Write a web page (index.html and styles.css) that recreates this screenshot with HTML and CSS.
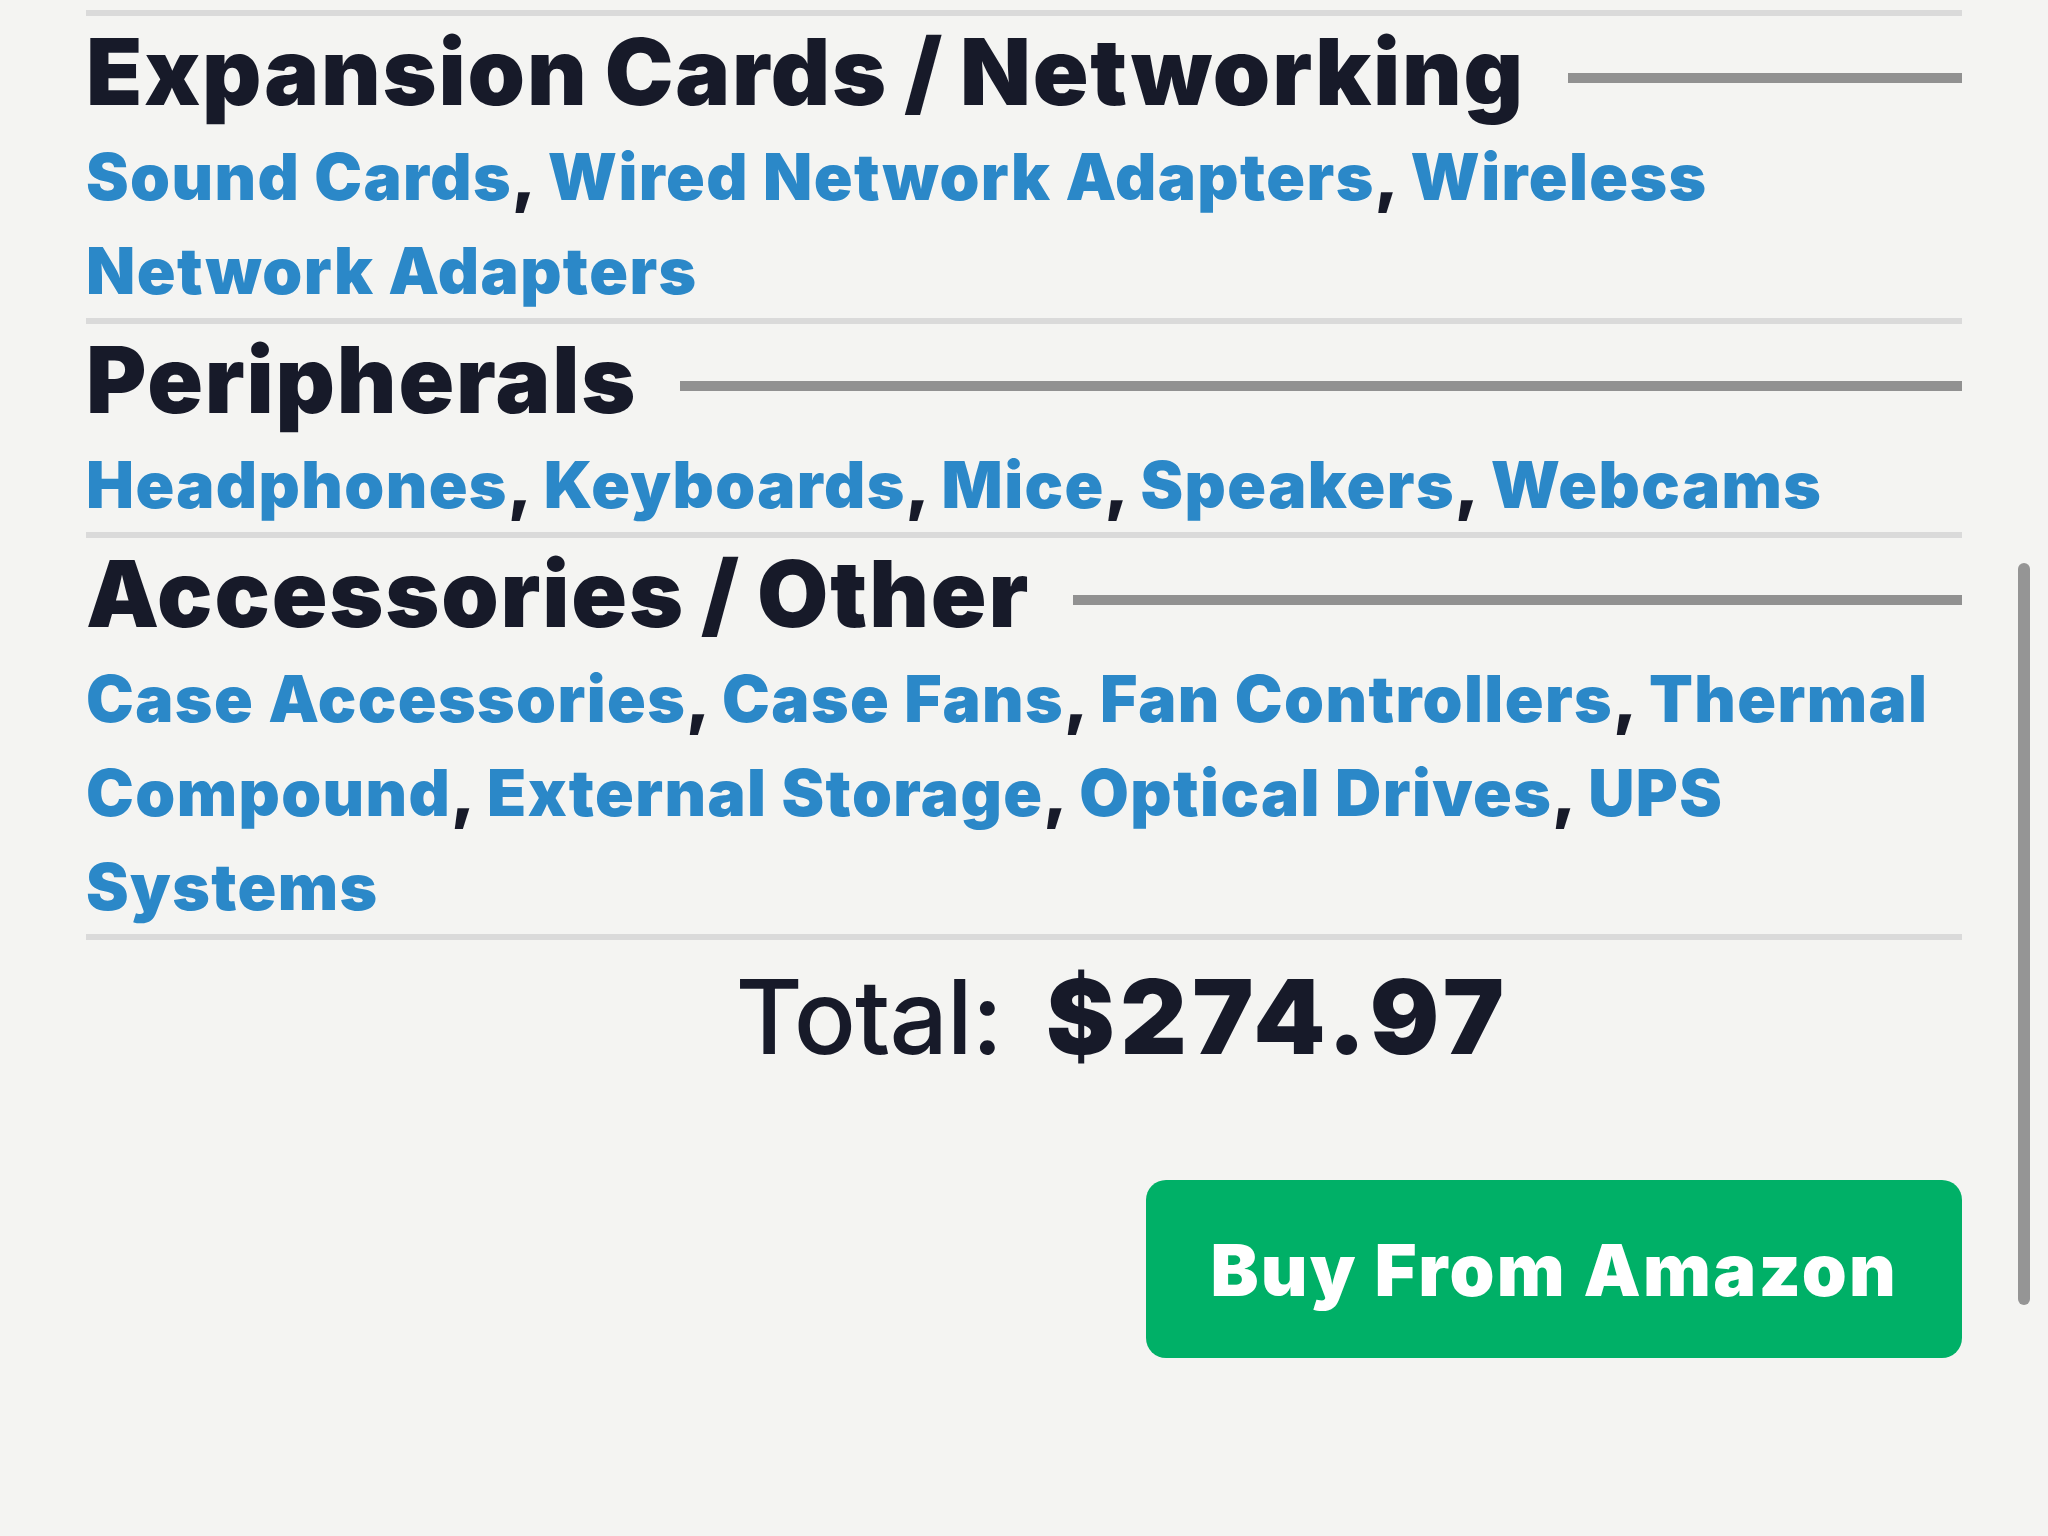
FILE: index.html
```html
<!DOCTYPE html>
<html lang="en">
<head>
  <meta charset="UTF-8" />
  <title>Build Parts – Summary</title>
  <link rel="stylesheet" href="styles.css">
</head>
<body>
  <div class="build-list">
    <div class="category">
      <div class="category-head">
        <h2>Expansion Cards / Networking</h2>
        <span class="head-line"></span>
      </div>
      <div class="parts">
        <a href="#">Sound Cards</a>, <a href="#">Wired Network Adapters</a>, <a href="#">Wireless Network Adapters</a>
      </div>
    </div>

    <div class="category">
      <div class="category-head">
        <h2>Peripherals</h2>
        <span class="head-line"></span>
      </div>
      <div class="parts">
        <a href="#">Headphones</a>, <a href="#">Keyboards</a>, <a href="#">Mice</a>, <a href="#">Speakers</a>, <a href="#">Webcams</a>
      </div>
    </div>

    <div class="category">
      <div class="category-head">
        <h2>Accessories / Other</h2>
        <span class="head-line"></span>
      </div>
      <div class="parts">
        <a href="#">Case Accessories</a>, <a href="#">Case Fans</a>, <a href="#">Fan Controllers</a>, <a href="#">Thermal Compound</a>, <a href="#">External Storage</a>, <a href="#">Optical Drives</a>, <a href="#">UPS Systems</a>
      </div>
    </div>
  </div>

  <div class="total-row">
    <span class="total-label">Total:</span>
    <span class="total-price" id="totalPrice">$274.97</span>
  </div>

  <div class="buy-row">
    <button class="buy-btn">Buy From Amazon</button>
  </div>

  <div class="scroll-thumb"></div>
</body>
</html>
```

FILE: styles.css
```css
body {
  margin: 0;
  padding: 10px 86px 0;
  background: #f4f4f2;
  color: #171a29;
  font-family: Inter, "Noto Sans", sans-serif;
}

.build-list {
  border-bottom: 6px solid #dadada;
}

.category {
  border-top: 6px solid #dadada;
}

.category-head {
  display: flex;
  align-items: center;
}

.category-head h2 {
  margin: 0;
  font-size: 92px;
  font-weight: 900;
  letter-spacing: 0.02em;
  word-spacing: -4px;
  line-height: normal;
}

.head-line {
  flex: 1;
  height: 10px;
  margin: 13px 0 0 43px;
  background: #919191;
}

.parts {
  padding-top: 3px;
  font-size: 64px;
  font-weight: 900;
  letter-spacing: 0.022em;
  line-height: 94px;
}

.parts a {
  color: #2b88c8;
  text-decoration: none;
}

.total-row {
  display: grid;
  grid-template-columns: 1fr 1fr;
  column-gap: 44px;
  margin-top: 14px;
  font-size: 103px;
  line-height: normal;
}

.total-label {
  justify-self: end;
  font-weight: 500;
  letter-spacing: -0.01em;
}

.total-price {
  font-weight: 900;
  letter-spacing: 0.054em;
}

.buy-row {
  display: flex;
  justify-content: flex-end;
  margin-top: 101px;
}

.buy-btn {
  background: #00b067;
  color: white;
  border: none;
  border-radius: 20px;
  padding: 46px 64px 45px;
  font-family: inherit;
  font-size: 72px;
  font-weight: 900;
  letter-spacing: 0.032em;
  line-height: normal;
  cursor: pointer;
}

/* iOS-style overlay scroll indicator */
.scroll-thumb {
  position: fixed;
  top: 563px;
  right: 18px;
  width: 12px;
  height: 742px;
  border-radius: 6px;
  background: #959595;
}
```
